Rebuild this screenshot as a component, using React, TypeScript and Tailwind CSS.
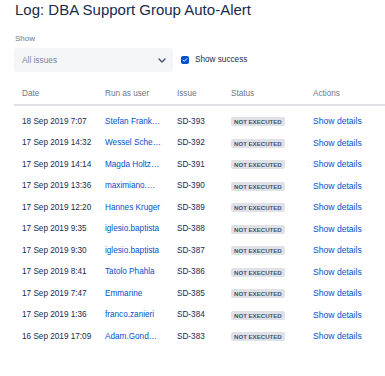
import React from 'react';

const rows = [
  { date: '18 Sep 2019 7:07', user: 'Stefan Frank-Schmidt', issue: 'SD-393' },
  { date: '17 Sep 2019 14:32', user: 'Wessel Scheepers', issue: 'SD-392' },
  { date: '17 Sep 2019 14:14', user: 'Magda Holtzhausen', issue: 'SD-391' },
  { date: '17 Sep 2019 13:36', user: 'maximiano.monteiro', issue: 'SD-390' },
  { date: '17 Sep 2019 12:20', user: 'Hannes Kruger', issue: 'SD-389' },
  { date: '17 Sep 2019 9:35', user: 'iglesio.baptista', issue: 'SD-388' },
  { date: '17 Sep 2019 9:30', user: 'iglesio.baptista', issue: 'SD-387' },
  { date: '17 Sep 2019 8:41', user: 'Tatolo Phahla', issue: 'SD-386' },
  { date: '17 Sep 2019 7:47', user: 'Emmarine', issue: 'SD-385' },
  { date: '17 Sep 2019 1:36', user: 'franco.zanieri', issue: 'SD-384' },
  { date: '16 Sep 2019 17:09', user: 'Adam.Gondwana', issue: 'SD-383' },
];

const cols = 'grid grid-cols-[83px_72px_54px_82px_1fr]';

export default function App() {
  return (
    <div
      className="w-[385px] h-[376px] overflow-hidden bg-white text-[#172b4d]"
      style={{ fontFamily: '"Liberation Sans", Arial, sans-serif' }}
    >
      <div className="pl-[14px]">
        <h1 className="pl-[1px] text-[15px] leading-[20px] text-[#172b4d]">
          Log: DBA Support Group Auto-Alert
        </h1>

        <div className="mt-[13px] pl-[1px] text-[8px] leading-[12px] text-[#6b778c]">Show</div>

        <div className="mt-[3px] flex items-center">
          <div className="w-[159px] h-[24px] rounded-[3px] bg-[#f4f5f7] flex items-center justify-between pl-[8px] pr-[7px]">
            <span className="text-[8.3px] text-[#7a869a]">All issues</span>
            <svg width="8" height="5" viewBox="0 0 8 5" fill="none">
              <path d="M1 1l3 3 3-3" stroke="#42526e" strokeWidth="1.4" strokeLinecap="round" strokeLinejoin="round" />
            </svg>
          </div>
          <label className="ml-[8px] flex items-center gap-[6px]">
            <span className="w-[8px] h-[8px] rounded-[2px] bg-[#0052cc] flex items-center justify-center">
              <svg width="6" height="6" viewBox="0 0 12 12" fill="none">
                <path d="M2.5 6.2l2.3 2.3 4.7-5" stroke="white" strokeWidth="2" strokeLinecap="round" strokeLinejoin="round" />
              </svg>
            </span>
            <span className="text-[8.2px] text-[#172b4d]">Show success</span>
          </label>
        </div>

        <div className={`${cols} mt-[12px] h-[22px] items-center border-b-2 border-[#dfe1e6] text-[8.2px] text-[#6b778c]`}>
          <div className="pl-[8px]">Date</div>
          <div className="pl-[8px]">Run as user</div>
          <div className="pl-[8px]">Issue</div>
          <div className="pl-[8px]">Status</div>
          <div className="pl-[8px]">Actions</div>
        </div>

        <div className="pt-[5px]">
          {rows.map((r) => (
            <div key={r.issue} className={`${cols} h-[21.5px] items-center text-[8.2px]`}>
              <div className="pl-[8px] whitespace-nowrap">{r.date}</div>
              <div className="pl-[8px] pr-[8px] truncate text-[#0052cc]">{r.user}</div>
              <div className="pl-[8px]">{r.issue}</div>
              <div className="pl-[8px] flex">
                <span className="rounded-[2px] bg-[#dfe1e6] px-[3px] text-[6.1px] leading-[9px] font-bold text-[#42526e]">
                  NOT EXECUTED
                </span>
              </div>
              <div className="pl-[8px] text-[8.6px] text-[#0052cc] whitespace-nowrap">Show details</div>
            </div>
          ))}
        </div>
      </div>
    </div>
  );
}
